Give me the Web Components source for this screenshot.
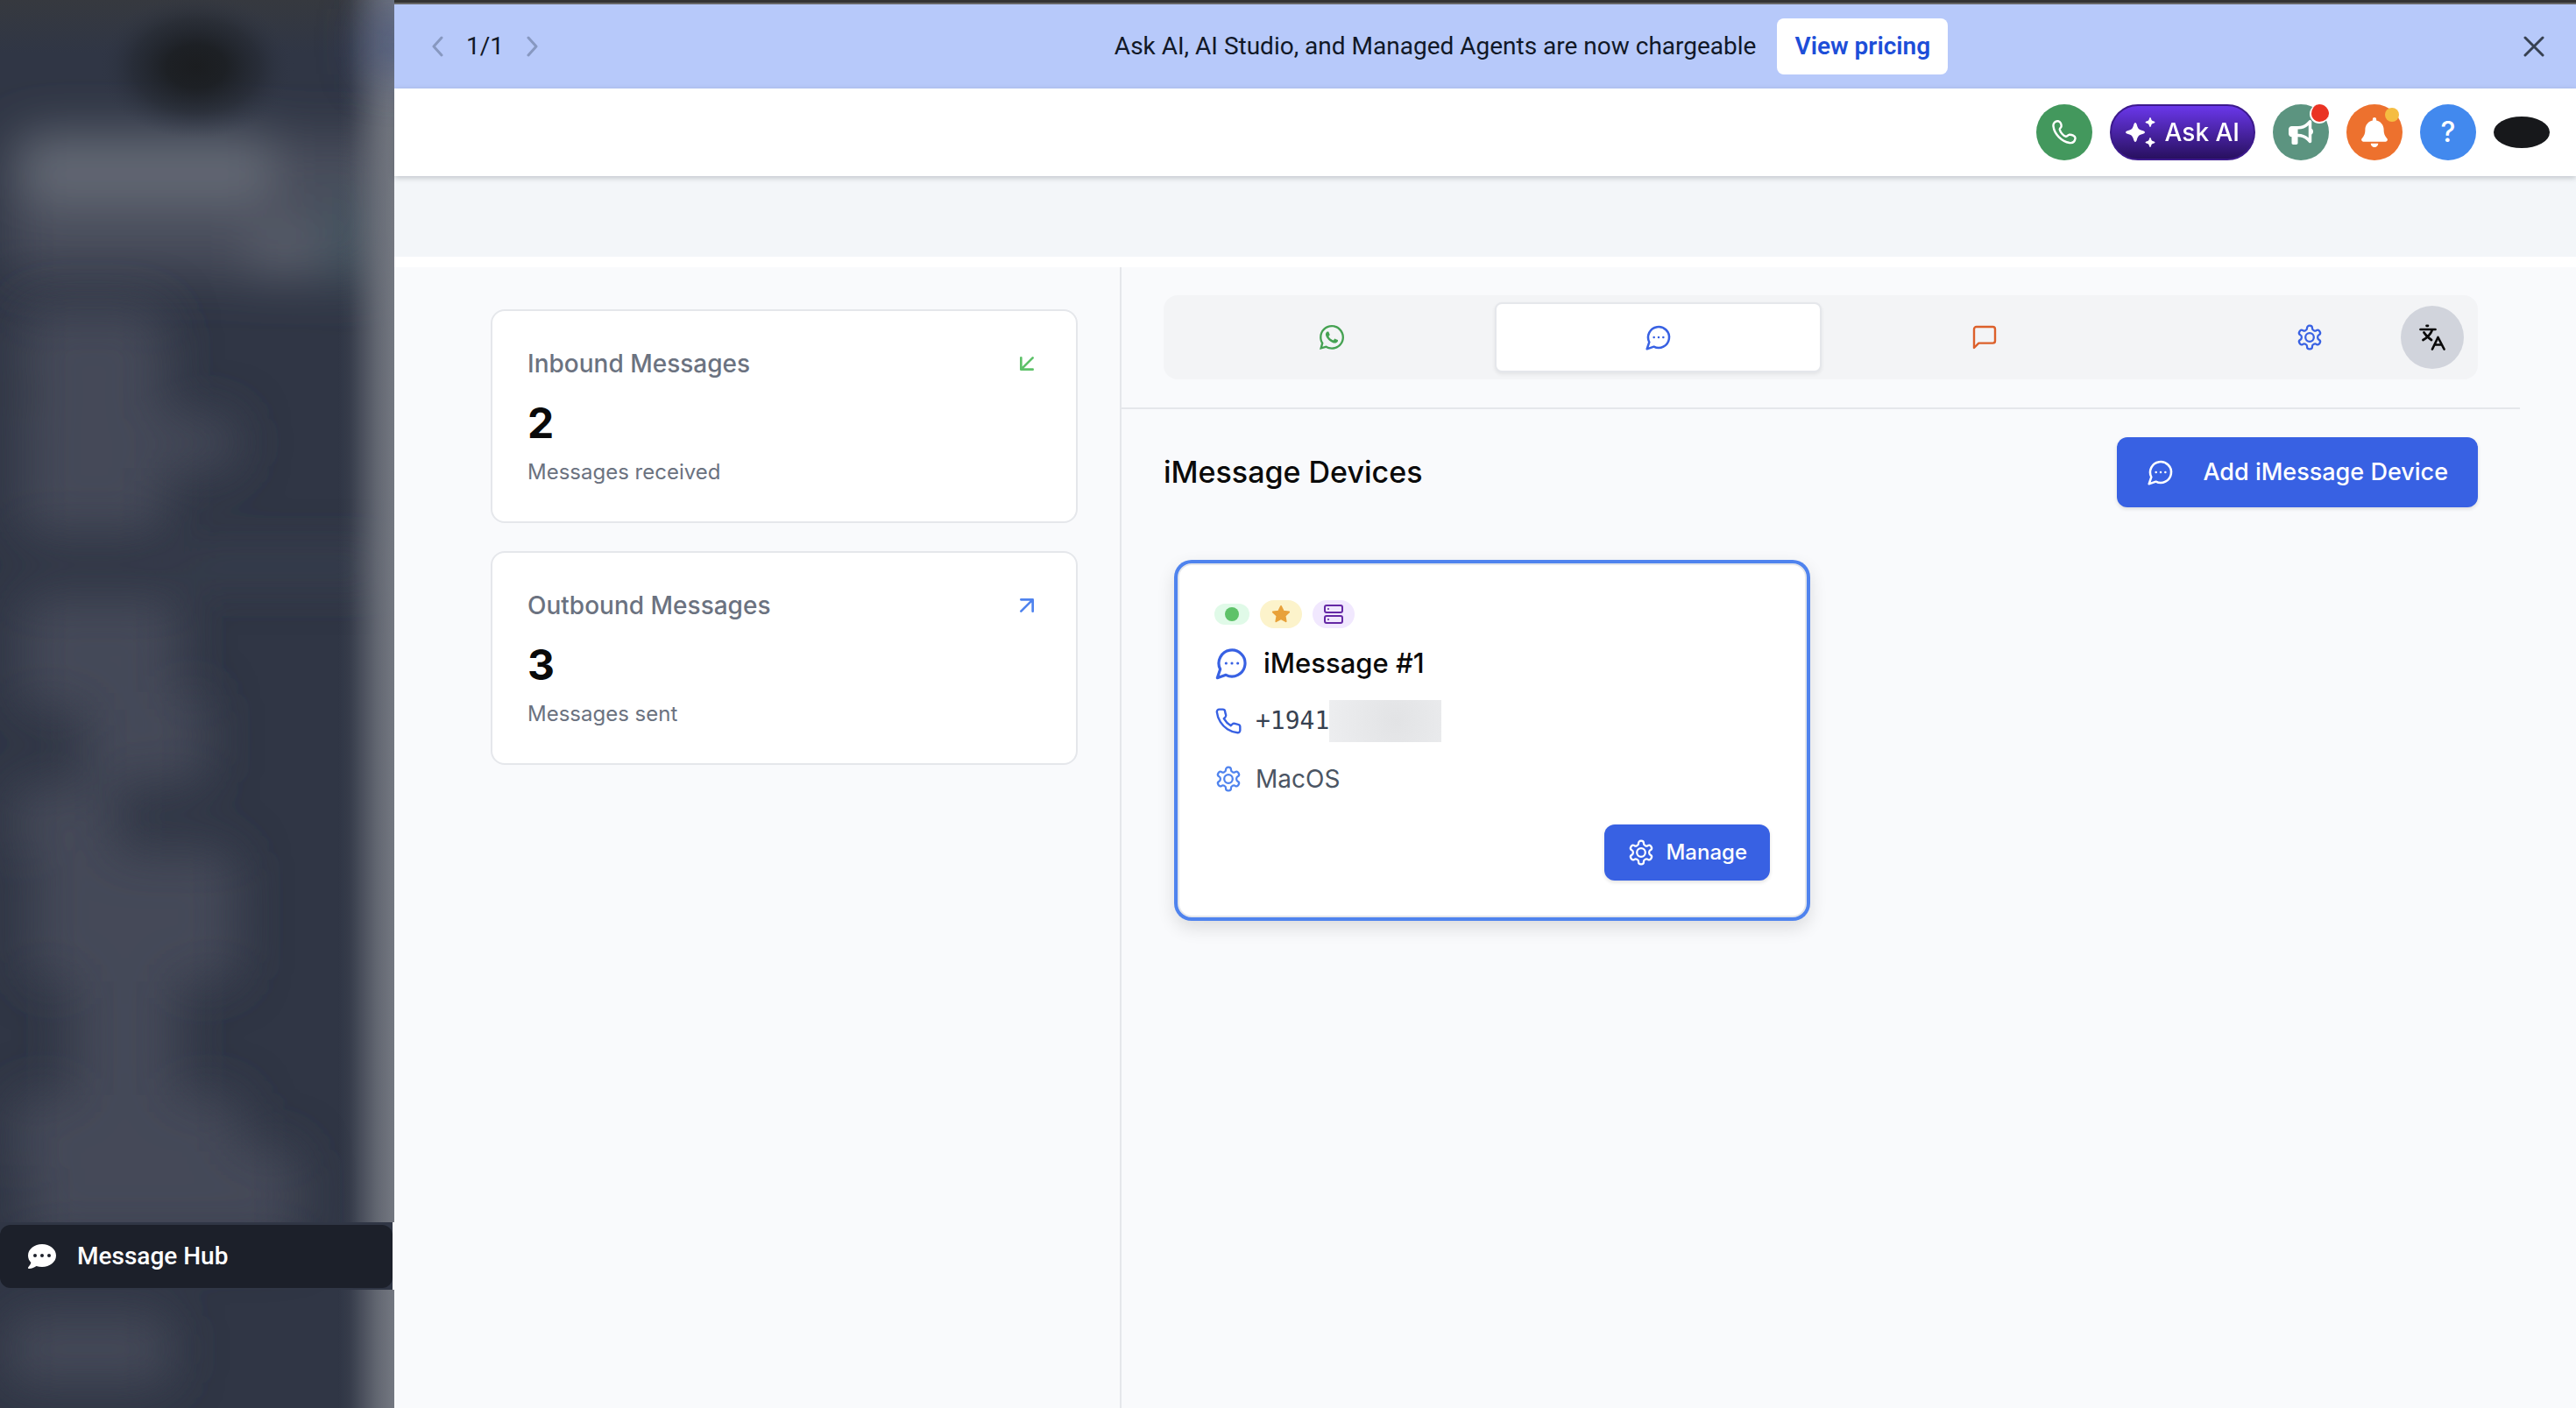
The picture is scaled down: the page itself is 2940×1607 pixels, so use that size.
<!DOCTYPE html>
<html lang="en">
<head>
<meta charset="utf-8">
<meta name="viewport" content="width=device-width, initial-scale=1">
<title>Message Hub</title>
<style>
  html, body { margin: 0; }
  body { min-height: 100vh; background: #f9fafc; color: #0a0a0a; font-family: Inter, "Liberation Sans", sans-serif; }
</style>
</head>
<body>
<hub-app></hub-app>
<script>
const define = (name, html) => {
  const template = document.createElement('template');
  template.innerHTML = html;
  customElements.define(name, class extends HTMLElement {
    constructor() {
      super();
      this.attachShadow({ mode: 'open' }).append(template.content.cloneNode(true));
    }
  });
};

const line = (body, width = 2, box = '0 0 24 24') =>
  `<svg viewBox="${box}" fill="none" stroke="currentColor" stroke-width="${width}" stroke-linecap="round" stroke-linejoin="round" aria-hidden="true">${body}</svg>`;
const solid = (body, box) => `<svg viewBox="${box}" fill="currentColor" aria-hidden="true">${body}</svg>`;

const icons = {
  gear: line('<path d="M12.22 2h-.44a2 2 0 0 0-2 2v.18a2 2 0 0 1-1 1.73l-.43.25a2 2 0 0 1-2 0l-.15-.08a2 2 0 0 0-2.73.73l-.22.38a2 2 0 0 0 .73 2.73l.15.1a2 2 0 0 1 1 1.72v.51a2 2 0 0 1-1 1.74l-.15.09a2 2 0 0 0-.73 2.73l.22.38a2 2 0 0 0 2.73.73l.15-.08a2 2 0 0 1 2 0l.43.25a2 2 0 0 1 1 1.73V20a2 2 0 0 0 2 2h.44a2 2 0 0 0 2-2v-.18a2 2 0 0 1 1-1.73l.43-.25a2 2 0 0 1 2 0l.15.08a2 2 0 0 0 2.73-.73l.22-.39a2 2 0 0 0-.73-2.73l-.15-.08a2 2 0 0 1-1-1.74v-.5a2 2 0 0 1 1-1.74l.15-.09a2 2 0 0 0 .73-2.73l-.22-.38a2 2 0 0 0-2.73-.73l-.15.08a2 2 0 0 1-2 0l-.43-.25a2 2 0 0 1-1-1.73V4a2 2 0 0 0-2-2z"/><circle cx="12" cy="12" r="3.6"/>', 1.7),
  chat: line('<path d="M7.9 20A9 9 0 1 0 4 16.1L2 22Z"/><path d="M8 12h.01M12 12h.01M16 12h.01"/>', 1.9),
  phone: line('<path d="M22 16.92v3a2 2 0 0 1-2.18 2 19.79 19.79 0 0 1-8.63-3.07 19.5 19.5 0 0 1-6-6 19.79 19.79 0 0 1-3.07-8.67A2 2 0 0 1 4.11 2h3a2 2 0 0 1 2 1.72 12.84 12.84 0 0 0 .7 2.81 2 2 0 0 1-.45 2.11L8.09 9.91a16 16 0 0 0 6 6l1.27-1.27a2 2 0 0 1 2.11-.45 12.84 12.84 0 0 0 2.81.7A2 2 0 0 1 22 16.92z"/>', 1.8),
  server: line('<rect x="2" y="2" width="20" height="8" rx="2"/><rect x="2" y="14" width="20" height="8" rx="2"/><path d="M6 6h.01M6 18h.01"/>'),
  star: solid('<path stroke="currentColor" stroke-width="2" stroke-linejoin="round" d="M12 2l3.09 6.26L22 9.27l-5 4.87 1.18 6.88L12 17.77l-6.18 3.25L7 14.14 2 9.27l6.91-1.01L12 2z"/>', '0 0 24 24'),
  square: line('<path d="M21 15a2 2 0 0 1-2 2H7l-4 4V5a2 2 0 0 1 2-2h14a2 2 0 0 1 2 2z"/>', 1.8),
  inbound: line('<path d="M17 7 7 17M17 17H7V7"/>'),
  outbound: line('<path d="M7 7h10v10M7 17 17 7"/>'),
  prev: line('<path d="M12 2 3 12l9 10"/>', 3, '0 0 14 24'),
  next: line('<path d="m2 2 9 10-9 10"/>', 3, '0 0 14 24'),
  close: line('<path d="m2 2 20 20M22 2 2 22"/>', 3),
  whatsapp: solid('<path d="M380.9 97.1C339 55.1 283.2 32 223.9 32c-122.4 0-222 99.6-222 222 0 39.1 10.2 77.3 29.6 111L0 480l117.7-30.9c32.4 17.7 68.9 27 106.1 27h.1c122.3 0 224.1-99.6 224.1-222 0-59.3-25.2-115-67.1-157zm-157 341.6c-33.2 0-65.7-8.9-94-25.7l-6.7-4-69.8 18.3L72 359.2l-4.4-7c-18.5-29.4-28.2-63.3-28.2-98.2 0-101.7 82.8-184.5 184.6-184.5 49.3 0 95.6 19.2 130.4 54.1 34.8 34.9 56.2 81.2 56.1 130.5 0 101.8-84.9 184.6-186.6 184.6zm101.2-138.2c-5.5-2.8-32.8-16.2-37.9-18-5.1-1.9-8.8-2.8-12.5 2.8-3.7 5.6-14.3 18-17.6 21.8-3.2 3.7-6.5 4.2-12 1.4-32.6-16.3-54-29.1-75.5-66-5.7-9.8 5.7-9.1 16.3-30.3 1.8-3.7.9-6.9-.5-9.7-1.4-2.8-12.5-30.1-17.1-41.2-4.5-10.8-9.1-9.3-12.5-9.5-3.2-.2-6.9-.2-10.6-.2-3.7 0-9.7 1.4-14.8 6.9-5.1 5.6-19.4 19-19.4 46.3 0 27.3 19.9 53.7 22.6 57.4 2.8 3.7 39.1 59.7 94.8 83.8 35.2 15.2 49 16.5 66.6 13.9 10.7-1.6 32.8-13.4 37.4-26.4 4.6-13 4.6-24.1 3.2-26.4-1.3-2.5-5-3.9-10.5-6.6z"/>', '0 32 448 448'),
  handset: line('<path d="M1.5 7C1 3 4 1 7 1.2c2.5.3 4 3.8 3.5 6.3-.3 1.5-2 2-1.7 3.5.7 3 4.2 7 6.7 7.7 1.5.3 2-1.2 4-1.9 2.5-.5 7.5 1.2 7 4.2-.5 3.5-3 5.5-6.5 5C11 24.5 2.500 16 1.5 7Z"/>', 2.4, '0 0 28 28'),
  horn: solid('<path d="M480 32c0-12.900-7.800-24.600-19.800-29.600s-25.700-2.200-34.900 6.900L381.700 53c-48 48-113.100 75-181 75H64c-35.300 0-64 28.700-64 64v96c0 35.300 28.700 64 64 64v128c0 17.700 14.300 32 32 32h64c17.700 0 32-14.300 32-32V352l8.700 0c67.900 0 133 27 181 75l43.600 43.600c9.200 9.200 22.900 11.900 34.900 6.900s19.800-16.600 19.800-29.600V300.400c18.600-8.800 32-32.500 32-60.400s-13.400-51.600-32-60.400V32zm-64 76.700V371.300C357.200 317.800 280.500 288 200.700 288H192V192h8.700c79.800 0 156.500-29.800 215.300-83.300z"/>', '0 0 512 512'),
  bell: solid('<path d="M224 0c-17.700 0-32 14.300-32 32V51.200C119 66 64 130.600 64 208v18.800c0 47-17.300 92.400-48.500 127.600l-7.400 8.300c-8.400 9.400-10.400 22.900-5.300 34.400S19.400 416 32 416H416c12.600 0 24-7.400 29.200-18.900s3.100-25-5.300-34.400l-7.400-8.300C401.300 319.200 384 273.900 384 226.800V208c0-77.400-55-142-128-156.800V32c0-17.700-14.300-32-32-32zm45.300 493.300c12-12 18.700-28.300 18.700-45.300H224 160c0 17 6.700 33.300 18.700 45.300s28.300 18.700 45.300 18.700s33.300-6.700 45.300-18.700z"/>', '0 0 448 512'),
  sparkles: solid('<path d="M11 6q1 0 1.700 2c1.300 5 2.300 6 7.300 7.300q2 .7 2 1.700t-2 1.700c-5 1.300-6 2.300-7.300 7.300q-.7 2-1.700 2t-1.700-2c-1.300-5-2.300-6-7.300-7.300q-2-.7-2-1.700t2-1.700c5-1.300 6-2.300 7.300-7.300q.7-2 1.700-2z"/><path d="M28 0q.5 0 .9 1.100c.6 2.400 1.100 2.900 3.500 3.500q1.100.4 1.100.9t-1.100.9c-2.400.6-2.900 1.100-3.500 3.500q-.4 1.100-.9 1.100t-.9-1.100c-.6-2.400-1.100-2.900-3.500-3.500q-1.100-.4-1.100-.9t1.100-.9c2.400-.6 2.900-1.100 3.500-3.500q.4-1.100.9-1.100z"/><path d="M28 23q.5 0 .9 1.100c.6 2.400 1.100 2.900 3.500 3.500q1.100.4 1.100.9t-1.100.9c-2.400.6-2.900 1.100-3.500 3.500q-.4 1.100-.9 1.100t-.9-1.100c-.6-2.400-1.100-2.900-3.500-3.500q-1.100-.4-1.100-.9t1.100-.9c2.400-.6 2.900-1.100 3.500-3.500q.4-1.100.9-1.100z"/>', '0 0 34 34'),
  translate: line('<path d="M8.500 1.800h1.500M1.500 6h17M15 6.500C13 11.500 9 15.500 4.500 18M5.500 9.500c2 3.500 4.500 6 8.500 8.500M15 28.500 21.500 15l7 13.500M17.500 23.500h8"/>', 2.7, '0 0 30 30'),
  bubble: solid('<path fill-rule="evenodd" d="M16 0c8.800 0 16 5.600 16 13s-7.200 13-16 13c-2.300 0-4.500-.4-6.500-1.100C7.600 26.400 4.500 28 1 28c-.9 0-1.300-1-.7-1.700 1.700-1.900 2.700-3.500 3.100-5.200C1.300 18.900 0 16.100 0 13 0 5.600 7.200 0 16 0zM8 11a2 2 0 1 0 0 4 2 2 0 0 0 0-4zm8 0a2 2 0 1 0 0 4 2 2 0 0 0 0-4zm8 0a2 2 0 1 0 0 4 2 2 0 0 0 0-4z"/>', '0 0 32 28')
};

customElements.define('hub-icon', class extends HTMLElement {
  connectedCallback() {
    if (this.shadowRoot) return;
    this.attachShadow({ mode: 'open' }).innerHTML = `
      <style>
        :host { display: inline-flex; flex: none; width: 32px; height: 32px; }
        svg { width: 100%; height: 100%; display: block; }
      </style>${icons[this.getAttribute('name')]}`;
  }
});

define('hub-sidebar', `
  <style>
    :host { position: relative; display: flex; flex-direction: column; justify-content: flex-end; flex: 0 0 450px; box-sizing: border-box; padding-bottom: 135px; background: #303645; overflow: hidden; }
    .haze { position: absolute; inset: 0; width: 100%; height: 100%; }
    .row { position: relative; padding: 3px 2px 2px 0; background: linear-gradient(90deg, #303645 448px, #f9fafc 448px); }
    a { display: flex; align-items: center; gap: 24px; height: 72px; padding-left: 32px; border-radius: 12px; background: #1c202a; color: #fff; text-decoration: none; font: 500 28px/40px Roboto, "Liberation Sans", sans-serif; }
    hub-icon { height: 28px; }
  </style>
  <svg class="haze" viewBox="0 0 450 1607" preserveAspectRatio="none" aria-hidden="true">
    <defs>
      <filter id="soft" filterUnits="userSpaceOnUse" x="-100" y="-100" width="650" height="1807"><feGaussianBlur stdDeviation="28"/></filter>
      <linearGradient id="edge"><stop offset="0" stop-color="#747881" stop-opacity="0"/><stop offset=".2" stop-color="#747881" stop-opacity=".1"/><stop offset=".45" stop-color="#747881" stop-opacity=".42"/><stop offset=".7" stop-color="#747881" stop-opacity=".75"/><stop offset="1" stop-color="#747881"/></linearGradient>
      <linearGradient id="cap" x2="0" y2="1"><stop offset="0" stop-color="#36393f"/><stop offset="1" stop-color="#36393f" stop-opacity="0"/></linearGradient>
      <radialGradient id="spot"><stop offset="0" stop-color="#1b1d20"/><stop offset=".3" stop-color="#1c1f23" stop-opacity=".95"/><stop offset=".65" stop-color="#20242b" stop-opacity=".5"/><stop offset="1" stop-color="#303645" stop-opacity="0"/></radialGradient>
    </defs>
    <rect width="450" height="60" fill="url(#cap)"/>
    <g filter="url(#soft)">
      <rect x="10" y="155" width="440" height="160" rx="20" fill="#484d5b"/>
      <rect x="25" y="152" width="285" height="78" rx="20" fill="#646975"/>
      <rect x="285" y="257" width="80" height="60" rx="20" fill="#5a5f6c"/>
      <rect x="375" y="215" width="45" height="110" rx="20" fill="#435560"/>
    </g>
    <ellipse cx="224" cy="76" rx="112" ry="82" fill="url(#spot)"/>
    <g filter="url(#soft)" fill="#444a59">
      <rect x="25" y="350" width="160" height="95" rx="20"/>
      <rect x="25" y="365" width="165" height="85" rx="20"/>
      <rect x="25" y="450" width="165" height="160" rx="20"/>
      <rect x="150" y="475" width="120" height="60" rx="20"/>
      <rect x="200" y="635" width="250" height="24" rx="10" opacity=".7"/>
      <rect x="25" y="680" width="180" height="130" rx="20"/>
      <rect x="95" y="790" width="140" height="105" rx="20"/>
      <rect x="15" y="895" width="120" height="80" rx="20"/>
      <rect x="35" y="970" width="235" height="150" rx="20"/>
      <rect x="80" y="1105" width="125" height="155" rx="20"/>
      <rect x="15" y="1250" width="260" height="85" rx="20"/>
      <rect x="30" y="1310" width="310" height="110" rx="20"/>
      <rect x="10" y="1500" width="185" height="80" rx="20"/>
    </g>
    <rect x="386" y="0" width="64" height="1607" fill="url(#edge)"/>
    <rect x="420" y="10" width="60" height="75" fill="#3f5080" opacity=".7" filter="url(#soft)"/>
  </svg>
  <div class="row"><a href="#message-hub" aria-current="page"><hub-icon name="bubble"></hub-icon>Message Hub</a></div>
`);

define('promo-banner', `
  <style>
    :host { display: flex; align-items: center; height: 96px; padding: 2px 36px 0 42px; border-top: 3px solid #333; background: #b7c9fa; color: #111827; font: 400 28px/40px Roboto, "Liberation Sans", sans-serif; box-shadow: inset 0 2px #666; }
    .pager { display: flex; align-items: center; gap: 26px; }
    button { display: flex; padding: 0; border: 0; background: none; color: #8798c0; cursor: pointer; }
    button hub-icon { width: 14px; height: 24px; }
    .close { color: #374151; }
    .close hub-icon { width: 24px; }
    .offer { flex: 1; display: flex; align-items: center; justify-content: center; gap: 24px; }
    a { padding: 12px 20px; border-radius: 8px; background: #fff; color: #1d4ed8; font-weight: 600; text-decoration: none; }
  </style>
  <div class="pager">
    <button aria-label="Previous"><hub-icon name="prev"></hub-icon></button>
    <span>1/1</span>
    <button aria-label="Next"><hub-icon name="next"></hub-icon></button>
  </div>
  <div class="offer"><span>Ask AI, AI Studio, and Managed Agents are now chargeable</span><a href="#pricing">View pricing</a></div>
  <button class="close" aria-label="Close"><hub-icon name="close"></hub-icon></button>
`);

define('tool-bar', `
  <style>
    :host { position: relative; display: flex; align-items: center; justify-content: flex-end; gap: 20px; height: 100px; padding-right: 30px; background: #fff; box-shadow: 0 2px 6px rgba(60, 70, 80, .28); }
    button { position: relative; display: flex; align-items: center; justify-content: center; width: 64px; height: 64px; padding: 0; border: 0; border-radius: 32px; color: #fff; font: 500 32px/40px Inter, sans-serif; cursor: pointer; }
    hub-icon { width: 28px; height: 28px; }
    .call { background: #43985d; }
    .ai { width: auto; gap: 11px; padding: 0 16px; box-sizing: border-box; border: 2px solid #3c1a8c; background: linear-gradient(#6a37ea, #28105f); font-size: 28px; }
    .ai hub-icon { width: 34px; height: 34px; }
    .news { background: #5c9480; }
    .alerts { background: #ed712e; }
    .alerts hub-icon { width: 30px; height: 34px; }
    .help { background: #4289ee; }
    .badge { position: absolute; top: 0; right: 0; width: 20px; height: 20px; border: 2px solid #fff; border-width: 0 0 2px 2px; border-radius: 50%; background: #ea3323; }
    .alerts .badge { top: 4px; right: 4px; width: 16px; height: 16px; border: 0; background: #f5bd41; }
    .account { height: 36px; border-radius: 50%; background: #17181b; }
  </style>
  <button class="call" aria-label="Call"><hub-icon name="handset"></hub-icon></button>
  <button class="ai"><hub-icon name="sparkles"></hub-icon>Ask AI</button>
  <button class="news" aria-label="News"><hub-icon name="horn"></hub-icon><span class="badge"></span></button>
  <button class="alerts" aria-label="Alerts"><hub-icon name="bell"></hub-icon><span class="badge"></span></button>
  <button class="help">?</button>
  <button class="account" aria-label="Account"></button>
`);

define('stat-card', `
  <style>
    :host { display: block; padding: 40px; border: 2px solid #e5e7eb; border-radius: 16px; background: #fff; color: #6b7280; }
    header { display: flex; align-items: center; justify-content: space-between; }
    h3 { margin: 0; font-size: 28px; line-height: 40px; font-weight: 500; }
    .value { margin: 16px 0 8px; color: #0a0a0a; font-size: 48px; line-height: 64px; font-weight: 700; }
    p { margin: 0; font-size: 24px; line-height: 32px; }
  </style>
  <header><h3><slot name="title"></slot></h3><slot name="icon"></slot></header>
  <div class="value"><slot></slot></div>
  <p><slot name="note"></slot></p>
`);

define('channel-tabs', `
  <style>
    :host { position: relative; display: flex; gap: 2px; padding: 8px; border-radius: 16px; background: #f3f4f6; }
    button { display: flex; align-items: center; justify-content: center; padding: 0; border: 0; background: none; cursor: pointer; }
    .tab { flex: 1; height: 80px; box-sizing: border-box; border-radius: 8px; color: #3861e3; }
    .active { border: 2px solid #e5e7eb; background: #fff; box-shadow: 0 2px 4px rgba(0, 0, 0, .07); }
    .wa { color: #45a252; }
    .wa hub-icon { width: 28px; height: 28px; }
    .sms { color: #dc602b; }
    .lang { position: absolute; top: 12px; right: 16px; width: 72px; height: 72px; border-radius: 50%; background: #d1d4dc; color: #0a0a0a; }
    .lang hub-icon { width: 30px; height: 30px; }
  </style>
  <button class="tab wa" aria-label="WhatsApp"><hub-icon name="whatsapp"></hub-icon></button>
  <button class="tab active" aria-label="iMessage"><hub-icon name="chat"></hub-icon></button>
  <button class="tab sms" aria-label="SMS"><hub-icon name="square"></hub-icon></button>
  <button class="tab" aria-label="Settings"><hub-icon name="gear"></hub-icon></button>
  <button class="lang" aria-label="Language"><hub-icon name="translate"></hub-icon></button>
`);

define('device-card', `
  <style>
    :host { display: block; padding: 40px; border: 2px solid #e5e7eb; border-radius: 16px; background: #fff; box-shadow: 0 0 0 4px #4f83ee, 0 8px 20px 4px rgba(0, 0, 0, .12); }
    .badges { display: flex; align-items: center; gap: 12px; height: 32px; }
    .badges span { display: flex; align-items: center; justify-content: center; width: 48px; height: 32px; border-radius: 16px; }
    .badges hub-icon { width: 24px; height: 24px; }
    .badges .online { width: 40px; height: 24px; background: #e0fae8; }
    .online i { width: 16px; height: 16px; border-radius: 50%; background: #5ec269; }
    .star { background: #fcf3cb; color: #e8a13a; }
    .star hub-icon { width: 22px; height: 22px; }
    .server { background: #f1e8fe; color: #6427a4; }
    h3 { display: flex; align-items: center; gap: 16px; margin: 20px 0 0; font-size: 31px; line-height: 40px; font-weight: 500; }
    h3 hub-icon { width: 40px; height: 40px; color: #3861e3; }
    .line { display: flex; align-items: center; margin-top: 22px; font-size: 28px; line-height: 40px; color: #4b5563; }
    .line hub-icon { margin-right: 15px; color: #4f83ee; }
    .number { height: 48px; font-family: "DejaVu Sans Mono", monospace; color: #374151; }
    .number hub-icon { color: #3861e3; }
    .mask { width: 128px; height: 48px; background: radial-gradient(ellipse 90px 100px at 60% 50%, #e2e3e5, #eeeff1); }
    footer { display: flex; justify-content: flex-end; margin-top: 32px; }
    button { display: flex; align-items: center; gap: 12px; height: 64px; padding: 0 26px; border: 0; border-radius: 12px; background: #3861e3; color: #fff; font: 500 24px/32px Inter, sans-serif; box-shadow: 0 2px 4px rgba(0, 0, 0, .12); cursor: pointer; }
  </style>
  <div class="badges">
    <span class="online"><i></i></span>
    <span class="star"><hub-icon name="star"></hub-icon></span>
    <span class="server"><hub-icon name="server"></hub-icon></span>
  </div>
  <h3><hub-icon name="chat"></hub-icon><slot name="name"></slot></h3>
  <div class="line number"><hub-icon name="phone"></hub-icon><slot name="number"></slot><div class="mask"></div></div>
  <div class="line"><hub-icon name="gear"></hub-icon><slot name="system"></slot></div>
  <footer><button><hub-icon name="gear"></hub-icon>Manage</button></footer>
`);

define('device-panel', `
  <style>
    :host { display: block; }
    .top { padding: 32px 48px; border-bottom: 2px solid #e5e7eb; }
    .body { padding: 32px 48px; }
    .head { display: flex; align-items: center; justify-content: space-between; }
    h2 { margin: 0; font-size: 34px; line-height: 48px; font-weight: 500; }
    button { display: flex; align-items: center; gap: 32px; height: 80px; padding: 0 34px; border: 0; border-radius: 12px; background: #3861e3; color: #fff; font: 500 27px/40px Inter, sans-serif; box-shadow: 0 2px 4px rgba(0, 0, 0, .12); cursor: pointer; }
    .grid { display: grid; grid-template-columns: 1fr 1fr; gap: 32px; padding: 64px 16px 16px; }
  </style>
  <div class="top"><channel-tabs></channel-tabs></div>
  <div class="body">
    <div class="head"><h2>iMessage Devices</h2><button><hub-icon name="chat"></hub-icon>Add iMessage Device</button></div>
    <div class="grid"><slot></slot></div>
  </div>
`);

define('hub-app', `
  <style>
    :host { display: flex; min-height: 100vh; }
    main { flex: 1; min-width: 0; display: flex; flex-direction: column; }
    .band { height: 92px; background: #f3f6f9; border-bottom: 12px solid #fff; }
    .content { flex: 1; display: flex; }
    .stats { flex: 0 0 33.3333%; box-sizing: border-box; display: flex; flex-direction: column; gap: 32px; padding: 48px 48px 48px 110px; border-right: 2px solid #e5e7eb; }
    .devices { flex: 1; min-width: 0; padding-right: 64px; }
    .inbound { color: #5ec269; }
    .outbound { color: #4f83ee; }
  </style>
  <hub-sidebar></hub-sidebar>
  <main>
    <promo-banner></promo-banner>
    <tool-bar></tool-bar>
    <div class="band"></div>
    <div class="content">
      <section class="stats">
        <stat-card><span slot="title">Inbound Messages</span><hub-icon slot="icon" class="inbound" name="inbound"></hub-icon>2<span slot="note">Messages received</span></stat-card>
        <stat-card><span slot="title">Outbound Messages</span><hub-icon slot="icon" class="outbound" name="outbound"></hub-icon>3<span slot="note">Messages sent</span></stat-card>
      </section>
      <section class="devices">
        <device-panel>
          <device-card><span slot="name">iMessage #1</span><span slot="number">+1941</span><span slot="system">MacOS</span></device-card>
        </device-panel>
      </section>
    </div>
  </main>
`);
</script>
</body>
</html>
